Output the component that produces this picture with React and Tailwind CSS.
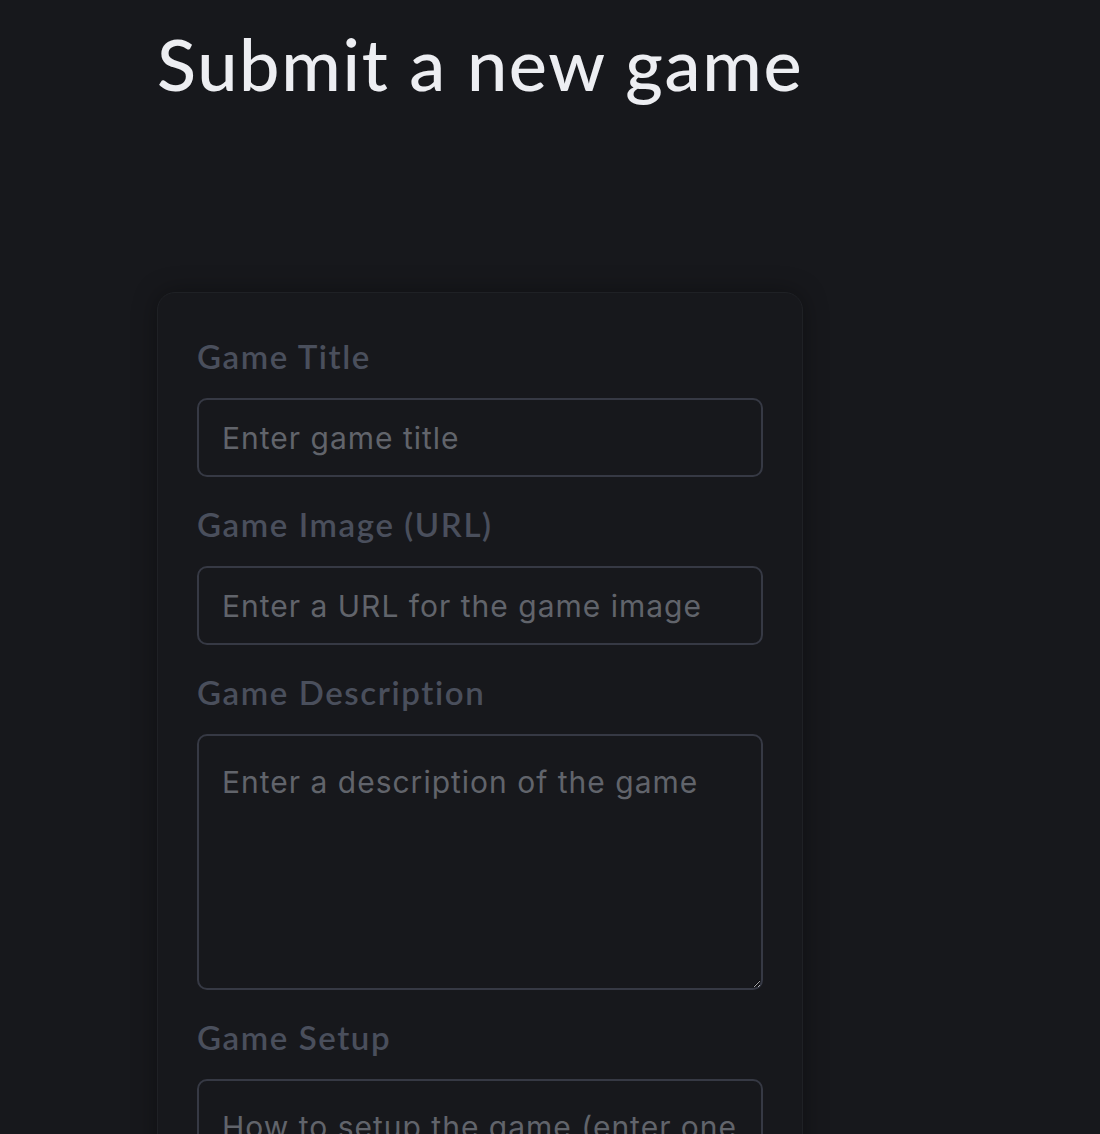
import React from 'react';

const labelCls =
  "block text-[33px] leading-[40px] font-semibold text-[#4a4f5c] tracking-[1.6px] [font-family:Lato,'Noto_Sans',sans-serif]";
const inputCls =
  "w-full h-[79px] rounded-[10px] border-2 border-[#363944] bg-transparent px-[23px] text-[30px] tracking-[1px] text-gray-300 placeholder:text-[#61646b] outline-none [font-family:Inter,sans-serif]";
const areaCls =
  "w-full h-[256px] rounded-[10px] border-2 border-[#363944] bg-transparent px-[23px] py-[26px] text-[30px] leading-[40px] tracking-[1px] text-gray-300 placeholder:text-[#61646b] outline-none [font-family:Inter,sans-serif]";

const Field = ({ label, children }) => (
  <div className="flex flex-col gap-[22px]">
    <label className={labelCls}>{label}</label>
    {children}
  </div>
);

const App = () => {
  return (
    <div className="min-h-screen bg-[#17181c] pl-[157px] pt-[17px]">
      <div className="w-[646px]">
        {/* Header */}
        <h1 className="whitespace-nowrap text-[72px] leading-[92px] font-medium text-[#edeef2] tracking-[1.7px] [font-family:Lato,'Noto_Sans',sans-serif]">
          Submit a new game
        </h1>

        {/* Form card */}
        <form className="mt-[183px] rounded-[18px] border border-[#1f2125] bg-[#17181c] shadow-[0_0_24px_rgba(0,0,0,0.35)] px-[39px] pt-[43px] pb-10 flex flex-col gap-[27px]">
          <Field label="Game Title">
            <input type="text" placeholder="Enter game title" className={inputCls} />
          </Field>
          <Field label="Game Image (URL)">
            <input type="text" placeholder="Enter a URL for the game image" className={inputCls} />
          </Field>
          <Field label="Game Description">
            <textarea placeholder="Enter a description of the game" className={areaCls} />
          </Field>
          <Field label="Game Setup">
            <textarea placeholder="How to setup the game (enter one step per line)" className={areaCls} />
          </Field>
        </form>
      </div>
    </div>
  );
};

export default App;
